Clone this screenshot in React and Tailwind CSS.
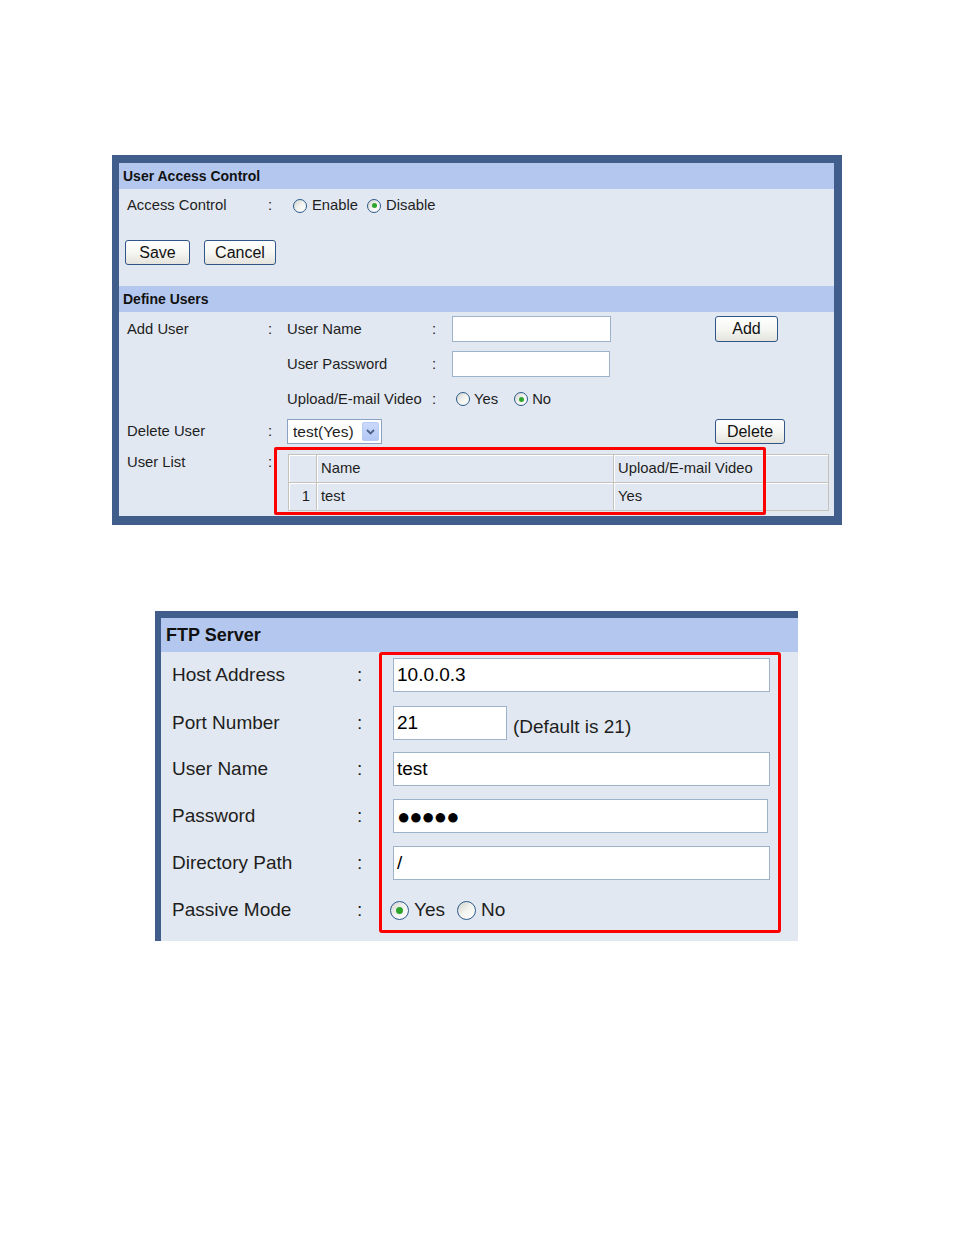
import React from 'react';

const font = { fontFamily: '"Liberation Sans", Arial, sans-serif' };

function Radio({ checked, big, className = '' }) {
  const box = big ? 'w-[19px] h-[19px]' : 'w-[14px] h-[14px]';
  const dot = big ? 'w-[7px] h-[7px]' : 'w-[5px] h-[5px]';
  return (
    <span
      className={`${box} ${className} shrink-0 inline-flex items-center justify-center rounded-full border border-[#2a5b8c] bg-linear-to-br from-[#d2d2cc] via-[#f3f3f0] to-white`}
    >
      {checked && <span className={`${dot} rounded-full bg-[#2da52d]`} />}
    </span>
  );
}

function XpButton({ children, className = '' }) {
  return (
    <button
      className={`flex items-center justify-center rounded-[3px] border border-[#2f5687] bg-linear-to-b from-white via-[#f6f6f3] to-[#e4e3dc] text-[16px] leading-none text-[#111] ${className}`}
    >
      {children}
    </button>
  );
}

function TextBox({ className = '', children }) {
  return (
    <div className={`flex items-center bg-white border border-[#9db2cb] ${className}`}>{children}</div>
  );
}

export default function App() {
  const users = [{ id: 1, name: 'test', upload: 'Yes' }];
  const ftpRows = [
    { label: 'Host Address', value: '10.0.0.3', width: 'w-[377px]' },
    { label: 'Port Number', value: '21', width: 'w-[114px]', note: '(Default is 21)' },
    { label: 'User Name', value: 'test', width: 'w-[377px]' },
    { label: 'Password', value: '●●●●●', width: 'w-[375px]', mask: true },
    { label: 'Directory Path', value: '/', width: 'w-[377px]' },
  ];

  return (
    <div className="min-h-[1235px] bg-white pt-[155px] text-[#1e1e1e]" style={font}>
      {/* User Access Control panel */}
      <div className="relative ml-[112px] w-[730px] border-t-8 border-l-[7px] border-r-8 border-b-[9px] border-[#405d8b] bg-[#e2e8f1]">
        <div className="h-[26px] flex items-center pl-1 bg-[#b4c8ef] text-[14px] font-bold text-[#111]">
          User Access Control
        </div>

        <div className="h-[33px] grid grid-cols-[141px_19px_1fr] items-center pl-2 text-[14.8px]">
          <span>Access Control</span>
          <span>:</span>
          <div className="ml-[6px] flex items-center">
            <Radio />
            <span className="ml-[5px]">Enable</span>
            <Radio checked className="ml-[9px]" />
            <span className="ml-[5px]">Disable</span>
          </div>
        </div>

        <div className="mt-[18px] mb-[21px] pl-[6px] flex gap-[14px]">
          <XpButton className="w-[65px] h-[25px]">Save</XpButton>
          <XpButton className="w-[72px] h-[25px]">Cancel</XpButton>
        </div>

        <div className="h-[26px] flex items-center pl-1 bg-[#b4c8ef] text-[14px] font-bold text-[#111]">
          Define Users
        </div>

        <div className="pl-2 text-[14.8px]">
          <div className="h-[34px] grid grid-cols-[141px_19px_145px_20px_auto_1fr] items-center">
            <span>Add User</span>
            <span>:</span>
            <span>User Name</span>
            <span>:</span>
            <TextBox className="w-[159px] h-[26px]" />
            <XpButton className="ml-[104px] w-[63px] h-[26px]">Add</XpButton>
          </div>
          <div className="h-[36px] grid grid-cols-[141px_19px_145px_20px_auto_1fr] items-center">
            <span />
            <span />
            <span>User Password</span>
            <span>:</span>
            <TextBox className="w-[158px] h-[26px]" />
            <span />
          </div>
          <div className="h-[34px] grid grid-cols-[141px_19px_145px_20px_1fr] items-center">
            <span />
            <span />
            <span>Upload/E-mail Video</span>
            <span>:</span>
            <div className="ml-[4px] flex items-center">
              <Radio />
              <span className="ml-[4px]">Yes</span>
              <Radio checked className="ml-[16px]" />
              <span className="ml-[4px]">No</span>
            </div>
          </div>
          <div className="h-[31px] grid grid-cols-[141px_19px_auto_1fr] items-center">
            <span>Delete User</span>
            <span>:</span>
            <div className="w-[95px] h-[25px] flex items-center justify-between bg-white border border-[#8aa3c2] pl-[5px] pr-[2px] text-[15.5px]">
              <span>test(Yes)</span>
              <span className="w-[17px] h-[19px] flex items-center justify-center rounded-[2px] bg-linear-to-b from-[#cbd9fb] to-[#b4c8f6] border border-[#b8cbf3]">
                <svg width="9" height="6" viewBox="0 0 9 6">
                  <polyline points="1,1 4.5,4.5 8,1" fill="none" stroke="#4d6185" strokeWidth="1.8" />
                </svg>
              </span>
            </div>
            <XpButton className="ml-[333px] w-[70px] h-[25px]">Delete</XpButton>
          </div>
          <div className="pt-[7px] pb-[5px] grid grid-cols-[141px_19px_1fr] items-start">
            <span className="-mt-[3px]">User List</span>
            <span className="-mt-[3px]">:</span>
            <table className="ml-[1px] w-[541px] border-collapse border border-[#c4c4bc]">
              <tbody>
                <tr className="h-[28px]">
                  <td className="w-[28px] border border-[#c4c4bc] shadow-[inset_1px_1px_0_#fff]" />
                  <td className="w-[297px] border border-[#c4c4bc] pl-[4px] shadow-[inset_1px_1px_0_#fff]">Name</td>
                  <td className="border border-[#c4c4bc] pl-[4px] shadow-[inset_1px_1px_0_#fff]">Upload/E-mail Video</td>
                </tr>
                {users.map((u) => (
                  <tr key={u.id} className="h-[28px]">
                    <td className="border border-[#c4c4bc] pr-[6px] text-right shadow-[inset_1px_1px_0_#fff]">{u.id}</td>
                    <td className="border border-[#c4c4bc] pl-[4px] shadow-[inset_1px_1px_0_#fff]">{u.name}</td>
                    <td className="border border-[#c4c4bc] pl-[4px] shadow-[inset_1px_1px_0_#fff]">{u.upload}</td>
                  </tr>
                ))}
              </tbody>
            </table>
          </div>
        </div>

        {/* highlight annotation */}
        <div className="absolute left-[155px] top-[284px] w-[492px] h-[68px] border-[3px] border-[#ff0000] rounded-[2px] pointer-events-none" />
      </div>

      {/* FTP Server panel */}
      <div className="relative mt-[86px] ml-[155px] w-[643px] border-t-[7px] border-l-[6px] border-[#405d8b] bg-[#e2e8f1]">
        <div className="h-[34px] flex items-center pl-[5px] bg-[#b4c8ef] text-[18px] font-bold text-[#111]">
          FTP Server
        </div>
        <div className="h-[289px] pt-[6px] pl-[11px] flex flex-col gap-[13px] text-[19px]">
          {ftpRows.map((r) => (
            <div key={r.label} className="h-[34px] grid grid-cols-[185px_36px_1fr] items-center">
              <span>{r.label}</span>
              <span>:</span>
              <div className="flex items-center">
                <TextBox className={`${r.width} h-[34px] pl-[3px] text-black`}>
                  <span className={r.mask ? 'text-[22px] tracking-[-1px]' : ''}>{r.value}</span>
                </TextBox>
                {r.note && <span className="ml-[6px] mt-[8px]">{r.note}</span>}
              </div>
            </div>
          ))}
          <div className="h-[34px] grid grid-cols-[185px_36px_1fr] items-center">
            <span>Passive Mode</span>
            <span>:</span>
            <div className="-ml-[3px] flex items-center">
              <Radio big checked />
              <span className="ml-[5px]">Yes</span>
              <Radio big className="ml-[12px]" />
              <span className="ml-[5px]">No</span>
            </div>
          </div>
        </div>

        {/* highlight annotation */}
        <div className="absolute left-[218px] top-[34px] w-[402px] h-[281px] border-[3px] border-[#ff0000] rounded-[3px] pointer-events-none" />
      </div>
    </div>
  );
}
